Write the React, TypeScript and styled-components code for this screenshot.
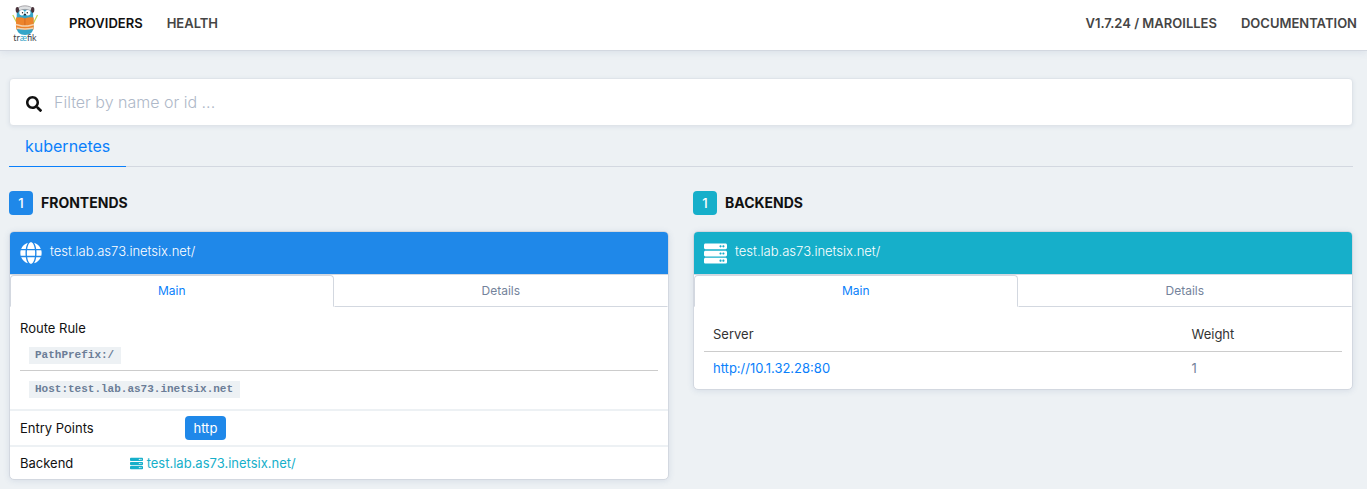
import React, { useState } from "react";
import styled, { createGlobalStyle } from "styled-components";
import { FaGlobe, FaSearch, FaServer } from "react-icons/fa";

const blue = "#1f88e9";
const teal = "#16afca";
const line = "#d3d8e0";

const GlobalStyle = createGlobalStyle`
  *, *::before, *::after { box-sizing: border-box; }
  body {
    margin: 0;
    background: #edf1f4;
    color: #111;
    font-family: Inter, "Liberation Sans", sans-serif;
    font-size: 13px;
    line-height: 20px;
  }
  a { text-decoration: none; color: #0a7ffb; }
  button { font: inherit; cursor: pointer; }
  h2, ul { margin: 0; padding: 0; }
`;

const Navbar = styled.nav`
  display: flex;
  align-items: center;
  gap: 24px;
  height: 51px;
  padding: 0 10px 4px 12px;
  background: #fff;
  border-bottom: 1px solid ${line};
  box-shadow: 0 1px 8px rgba(60, 90, 140, 0.12);
`;

const Brand = styled.a`
  display: flex;
  margin-right: 6px;
`;

const NavLink = styled.a<{ $active?: boolean }>`
  color: ${(p) => (p.$active ? "#111" : "#454545")};
  font-weight: 600;
  text-transform: uppercase;
`;

const Spacer = styled.div`
  flex: 1;
`;

const Main = styled.main`
  padding: 27px 14px 9px 9px;
`;

const SearchBox = styled.label`
  display: flex;
  align-items: center;
  gap: 12px;
  height: 48px;
  padding: 0 16px;
  background: #fff;
  border: 1px solid #dfe4e9;
  border-radius: 4px;
  box-shadow: 0 1px 4px rgba(60, 90, 140, 0.1);
  svg { margin-top: 3px; }
`;

const SearchInput = styled.input`
  flex: 1;
  min-width: 0;
  padding: 0;
  border: 0;
  outline: 0;
  background: transparent;
  color: #333;
  font: 300 16px/24px Inter, "Liberation Sans", sans-serif;
  &::placeholder { color: #aeb8c8; opacity: 1; }
`;

const ProviderTabs = styled.div`
  display: flex;
  height: 41px;
  border-bottom: 1px solid ${line};
`;

const ProviderTab = styled.button`
  height: 41px;
  padding: 0 16px;
  border: 0;
  border-bottom: 1px solid #0a7ffb;
  background: none;
  color: #0a7ffb;
  font-size: 16px;
`;

const Columns = styled.div`
  display: grid;
  grid-template-columns: 1fr 1fr;
  align-items: start;
  gap: 24px;
  padding-top: 24px;
`;

const SectionTitle = styled.h2`
  display: flex;
  align-items: center;
  gap: 8px;
  margin-bottom: 16px;
  font-size: 14px;
  line-height: 24px;
  font-weight: 700;
  text-transform: uppercase;
`;

const Count = styled.span<{ $color: string }>`
  width: 24px;
  border-radius: 4px;
  background: ${(p) => p.$color};
  color: #fff;
  font-size: 13px;
  font-weight: 500;
  text-align: center;
`;

const Card = styled.article`
  overflow: hidden;
  background: #fff;
  border: 1px solid ${line};
  border-radius: 5px;
  box-shadow: 0 1px 6px rgba(60, 90, 140, 0.12);
`;

const CardHeader = styled.header<{ $color: string }>`
  display: flex;
  align-items: center;
  gap: 8px;
  height: 42px;
  padding: 0 10px;
  background: ${(p) => p.$color};
  color: #fff;
  svg { flex: none; }
`;

const HeaderName = styled.span`
  padding-bottom: 4px;
  font-weight: 300;
`;

const CardTabs = styled.div`
  display: flex;
  border-top: 1px solid ${line};
`;

const CardTab = styled.button<{ $active: boolean }>`
  flex: 1 0 auto;
  height: 32px;
  padding: 0 12px;
  border: 1px solid ${(p) => (p.$active ? line : "transparent")};
  border-bottom-color: ${(p) => (p.$active ? "#fff" : line)};
  border-radius: ${(p) => (p.$active ? "4px 4px 0 0" : "0")};
  background: #fff;
  color: ${(p) => (p.$active ? "#0a7ffb" : "#74839b")};
  font-size: 12px;
`;

const Rules = styled.section`
  padding: 11px 10px;
`;

const Rule = styled.div`
  display: flex;
  padding: 10px 9px 0;
  & + & { border-top: 1px solid #ccc; }
  &:first-of-type { padding: 9px 9px 6px; }
`;

const Code = styled.code`
  padding: 0 7px 0 6px;
  background: #edf1f4;
  color: #6b7d97;
  font: 700 11px/17px "Liberation Mono", monospace;
`;

const Row = styled.div<{ $columns: string }>`
  display: grid;
  grid-template-columns: ${(p) => p.$columns};
  align-items: center;
  min-height: 34px;
  border-top: 2px solid #edf1f4;
  > * { margin: 0 10px; }
`;

const Tag = styled.span`
  justify-self: start;
  margin: 5px 10px;
  padding: 0 9px;
  border-radius: 4px;
  background: ${blue};
  color: #fff;
  line-height: 24px;
`;

const BackendLink = styled.a`
  display: flex;
  align-items: center;
  gap: 4px;
  color: ${teal};
`;

const TablePad = styled.div`
  padding: 11px 10px 4px;
`;

const Table = styled.table`
  width: 100%;
  border-collapse: collapse;
  table-layout: fixed;
  th, td { padding: 6px 9px 7px; text-align: left; font-weight: 400; }
  th { color: #333; border-bottom: 1px solid #ccc; }
  th:first-child { width: 75%; }
  td { color: #74839b; }
`;

function Logo() {
  return (
    <svg width="27" height="39" viewBox="0 0 27 39" role="img" aria-label="træfik">
      <path d="M.8 11 5.500 20M25.500 11 21 20" stroke="#c6d64b" strokeWidth="1.200" />
      <path d="M4.800 8C5.500 2.500 20.500 2.500 21 8L21.500 23C21.500 28 18 31 13 31C8 31 4.500 28 4.500 23Z" fill="#35a5c8" />
      <path d="M5.500 5C7 .8 19 .8 20.500 5L18 6.500C15 5 11 5 8 6.500Z" fill="#dfe1e3" stroke="#99969b" strokeWidth=".8" />
      <circle cx="10" cy="8.800" r="2.700" fill="#fff" />
      <circle cx="15.800" cy="8.800" r="2.700" fill="#fff" />
      <circle cx="10.500" cy="8.700" r=".7" fill="#222" />
      <circle cx="15.300" cy="8.700" r=".7" fill="#222" />
      <ellipse cx="12.900" cy="10.600" rx="1.300" ry=".9" fill="#253039" />
      <ellipse cx="5.300" cy="6" rx="1.700" ry="2.900" fill="#49333b" />
      <ellipse cx="20.700" cy="6" rx="1.700" ry="2.900" fill="#49333b" />
      <path d="M4 13.500Q9 12.500 12.900 14.500Q17 12.500 21.700 13.500V25.500Q17 24.500 12.900 26Q9 24.500 4 25.500Z" fill="#ed842b" />
      <path d="M12.900 14.500V22" stroke="#c9621a" strokeWidth=".7" />
      <path d="M3.800 20.500 10 22 16 22 22 20.500M4.500 24Q13 26 21.500 24" fill="none" stroke="#f4d3b0" strokeWidth="1.500" />
      <text x="13" y="37" textAnchor="middle" fontFamily="Lato, sans-serif" fontSize="9" fill="#424549">
        tr<tspan fill="#35a5c8">æ</tspan>fik
      </text>
    </svg>
  );
}

function Tabs() {
  const [active, setActive] = useState("Main");
  return (
    <CardTabs role="tablist">
      {["Main", "Details"].map((name) => (
        <CardTab
          key={name}
          role="tab"
          aria-selected={active === name}
          $active={active === name}
          onClick={() => setActive(name)}
        >
          {name}
        </CardTab>
      ))}
    </CardTabs>
  );
}

const host = "test.lab.as73.inetsix.net/";
const rules = ["PathPrefix:/", "Host:test.lab.as73.inetsix.net"];

export default function App() {
  return (
    <>
      <GlobalStyle />
      <Navbar>
        <Brand href="#home"><Logo /></Brand>
        <NavLink href="#providers" $active>Providers</NavLink>
        <NavLink href="#health">Health</NavLink>
        <Spacer />
        <NavLink href="#version">V1.7.24 / Maroilles</NavLink>
        <NavLink href="#documentation">Documentation</NavLink>
      </Navbar>
      <Main>
        <SearchBox>
          <FaSearch size={16} aria-hidden />
          <SearchInput type="text" aria-label="Filter" placeholder="Filter by name or id ..." />
        </SearchBox>
        <ProviderTabs role="tablist">
          <ProviderTab role="tab" aria-selected>kubernetes</ProviderTab>
        </ProviderTabs>
        <Columns>
          <section>
            <SectionTitle><Count $color={blue}>1</Count>Frontends</SectionTitle>
            <Card>
              <CardHeader $color={blue}>
                <FaGlobe size={22} aria-hidden />
                <HeaderName>{host}</HeaderName>
              </CardHeader>
              <Tabs />
              <Rules>
                <span>Route Rule</span>
                {rules.map((rule) => (
                  <Rule key={rule}><Code>{rule}</Code></Rule>
                ))}
              </Rules>
              <Row $columns="1fr 3fr">
                <span>Entry Points</span>
                <Tag>http</Tag>
              </Row>
              <Row $columns="1fr 5fr">
                <span>Backend</span>
                <BackendLink href="#backend"><FaServer size={13} aria-hidden />{host}</BackendLink>
              </Row>
            </Card>
          </section>
          <section>
            <SectionTitle><Count $color={teal}>1</Count>Backends</SectionTitle>
            <Card>
              <CardHeader $color={teal}>
                <FaServer size={23} aria-hidden />
                <HeaderName>{host}</HeaderName>
              </CardHeader>
              <Tabs />
              <TablePad>
                <Table>
                  <thead>
                    <tr><th scope="col">Server</th><th scope="col">Weight</th></tr>
                  </thead>
                  <tbody>
                    <tr><td><a href="http://10.1.32.28:80">http://10.1.32.28:80</a></td><td>1</td></tr>
                  </tbody>
                </Table>
              </TablePad>
            </Card>
          </section>
        </Columns>
      </Main>
    </>
  );
}
